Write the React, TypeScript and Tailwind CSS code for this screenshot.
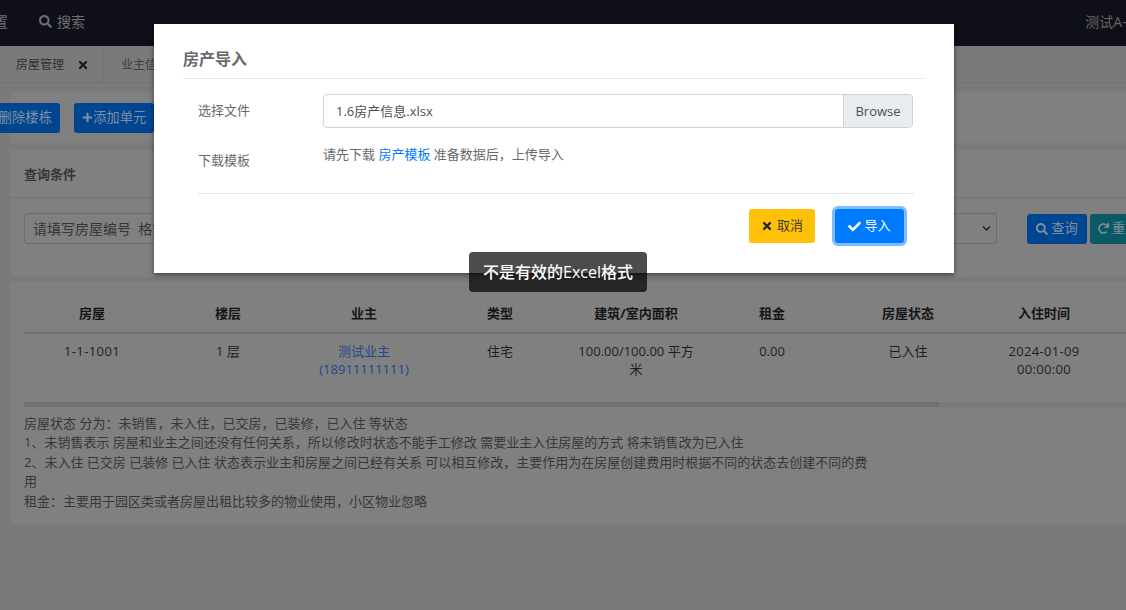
import { FaCheck, FaChevronDown, FaPlus, FaRedo, FaSearch, FaTimes } from "react-icons/fa";

const columns = ["房屋", "楼层", "业主", "类型", "建筑/室内面积", "租金", "房屋状态", "入住时间"];

const notes = [
  "房屋状态 分为：未销售，未入住，已交房，已装修，已入住 等状态",
  "1、未销售表示 房屋和业主之间还没有任何关系，所以修改时状态不能手工修改 需要业主入住房屋的方式 将未销售改为已入住",
  "2、未入住 已交房 已装修 已入住 状态表示业主和房屋之间已经有关系 可以相互修改，主要作用为在房屋创建费用时根据不同的状态去创建不同的费用",
  "租金：主要用于园区类或者房屋出租比较多的物业使用，小区物业忽略",
];

function Page() {
  return (
    <>
      <header className="flex h-[46px] items-center bg-[#0e0f18] pb-[4px] text-[14px] text-[#6f6f6f]">
        <span className="ml-[-20px] whitespace-nowrap">设置</span>
        <FaSearch className="ml-[31px] h-[13px] w-[13px]" />
        <span className="ml-[5px]">搜索</span>
        <span className="ml-auto mr-[-42px] whitespace-nowrap text-[#6a665e]">测试A-admin</span>
      </header>

      <nav className="flex h-[37px] border-b border-[#737373] pt-[1px] text-[12px] text-[#2f3030]">
        <div className="flex w-[104px] items-center rounded-tr border-r border-[#737373] pl-[16px]">
          <span>房屋管理</span>
          <FaTimes className="ml-[13px] h-[12px] w-[12px] text-[#1a1a1a]" />
        </div>
        <div className="flex items-center pl-[17px] text-[#3d3f40]">业主信息</div>
      </nav>

      <div className="ml-[10px] mt-[9px] flex h-[51px] w-[1150px] items-center gap-[14px] rounded-t bg-[#808080] text-[13.33px] text-[#7f90a2]">
        <button type="button" className="ml-[-19.3px] h-[30px] rounded-[3px] bg-[#00458f] px-[8px] whitespace-nowrap">
          删除楼栋
        </button>
        <button type="button" className="flex h-[30px] items-center rounded-[3px] bg-[#00458f] px-[8px] whitespace-nowrap">
          <FaPlus className="h-[11px] w-[11px]" />
          添加单元
        </button>
      </div>

      <section className="ml-[10px] mt-[7px] h-[127px] w-[1150px] rounded bg-[#808080]">
        <h2 className="flex h-[48px] items-center border-b border-[#737373] pl-[14px] pt-[2px] text-[13px] font-bold text-[#333536]">
          查询条件
        </h2>
        <div className="mt-[15px] flex items-center pl-[14px] text-[13px]">
          <div className="flex h-[31px] w-[740px] items-center rounded-[3px] border border-[#6c6c6c] pl-[8px] text-[14px] text-[#333536]">
            请填写房屋编号&nbsp;&nbsp;格式 楼栋-单元-房屋
          </div>
          <div className="ml-[8px] flex h-[31px] w-[225px] items-center justify-end rounded-[3px] border border-[#6c6c6c] pr-[5px]">
            <FaChevronDown className="h-[9px] w-[9px] text-[#1f1f1f]" />
          </div>
          <button type="button" className="ml-[30px] flex h-[30px] w-[60px] items-center justify-center gap-[3px] rounded-[3px] bg-[#00458f] text-[13.33px] text-[#7f90a2] whitespace-nowrap">
            <FaSearch className="h-[12px] w-[12px]" />
            查询
          </button>
          <button type="button" className="ml-[3px] flex h-[30px] items-center gap-[3px] rounded-[3px] bg-[#0a5a66] px-[8px] text-[13.33px] text-[#7f9094] whitespace-nowrap">
            <FaRedo className="h-[11px] w-[11px]" />
            重置
          </button>
        </div>
      </section>

      <section className="ml-[10px] mt-[5px] h-[243px] w-[1150px] rounded bg-[#808080] pl-[14px] text-[13px]">
        <table className="w-[1136px] table-fixed text-center text-[#1d1e1f]">
          <thead>
            <tr className="h-[51px] border-b-2 border-[#6f6f6f]">
              {columns.map((col) => (
                <th key={col} className="w-[136px] pt-[14px] font-bold text-[#151515]">
                  {col}
                </th>
              ))}
              <th />
            </tr>
          </thead>
          <tbody>
            <tr className="h-[69px] align-top leading-[18px]">
              <td className="pt-[8px] tracking-[0.4px]">1-1-1001</td>
              <td className="pt-[8px]">1 层</td>
              <td className="pt-[8px] text-[#1c4a8c]">
                测试业主
                <br />
                (18911111111)
              </td>
              <td className="pt-[8px]">住宅</td>
              <td className="px-[8px] pt-[8px]">100.00/100.00 平方米</td>
              <td className="pt-[8px]">0.00</td>
              <td className="pt-[8px]">已入住</td>
              <td className="px-[24px] pt-[8px] tracking-[0.3px]">2024-01-09 00:00:00</td>
              <td />
            </tr>
          </tbody>
        </table>
        <div className="h-[5px] bg-[#7a7a7a]">
          <div className="h-full w-[915px] bg-[#707070]" />
        </div>
        <div className="mt-[7px] w-[852px] leading-[19.4px] text-[#363738]">
          {notes.map((note) => (
            <p key={note}>{note}</p>
          ))}
        </div>
      </section>
    </>
  );
}

function ImportDialog() {
  return (
    <div className="absolute left-[154px] top-[24px] h-[249px] w-[800px] bg-white pl-[29px] pr-[30px] pt-[24px] text-[13px] text-[#676a6c] shadow-[0_2px_5px_rgba(0,0,0,0.5)]">
      <h3 className="h-[31px] border-b border-[#e7e7e7] text-[16px] font-bold leading-[22px] text-[#676a6c]">房产导入</h3>
      <div className="mt-[15px] flex h-[34px] items-center pl-[15px]">
        <label className="w-[125px] pb-[1px]">选择文件</label>
        <div className="flex h-[34px] w-[590px] items-center rounded-[4px] border border-[#ced4da] pl-[12px] text-[13px] text-[#495057]">
          <span className="flex-1 pt-[1px]">1.6房产信息.xlsx</span>
          <span className="flex h-full w-[69px] items-center justify-center rounded-r-[4px] border-l border-[#ced4da] bg-[#e9ecef] pt-[1px] text-[13px]">
            Browse
          </span>
        </div>
      </div>
      <div className="mt-[17px] flex pl-[15px]">
        <label className="mt-[3px] w-[125px] pt-[2px] leading-[20px]">下载模板</label>
        <p>
          请先下载 <a className="text-[#007bff]">房产模板</a> 准备数据后，上传导入
        </p>
      </div>
      <div className="ml-[15px] mt-[23px] w-[716px] border-t border-[#e7e7e7]" />
      <div className="ml-[566px] mt-[15px] flex gap-[20px]">
        <button type="button" className="flex h-[34px] w-[66px] items-center justify-center gap-[4px] rounded-[3px] bg-[#ffc107] text-[#3a3a2a]">
          <FaTimes className="h-[12px] w-[12px] text-[#212529]" />
          取消
        </button>
        <button type="button" className="flex h-[34px] w-[69px] items-center justify-center gap-[3px] rounded-[3px] bg-[#007bff] text-white ring-[3px] ring-[#80bdff]">
          <FaCheck className="h-[13px] w-[13px]" />
          导入
        </button>
      </div>
    </div>
  );
}

export default function App() {
  return (
    <div className="relative h-[610px] w-[1126px] overflow-hidden bg-[#7a7a7a] font-['Open_Sans','Noto_Sans_CJK_SC',sans-serif]">
      <Page />
      <ImportDialog />
      <div className="absolute left-[469px] top-[252px] flex h-[40px] w-[178px] items-center justify-center rounded-[4px] bg-black/70 text-[16px] font-medium text-white">
        不是有效的Excel格式
      </div>
    </div>
  );
}
